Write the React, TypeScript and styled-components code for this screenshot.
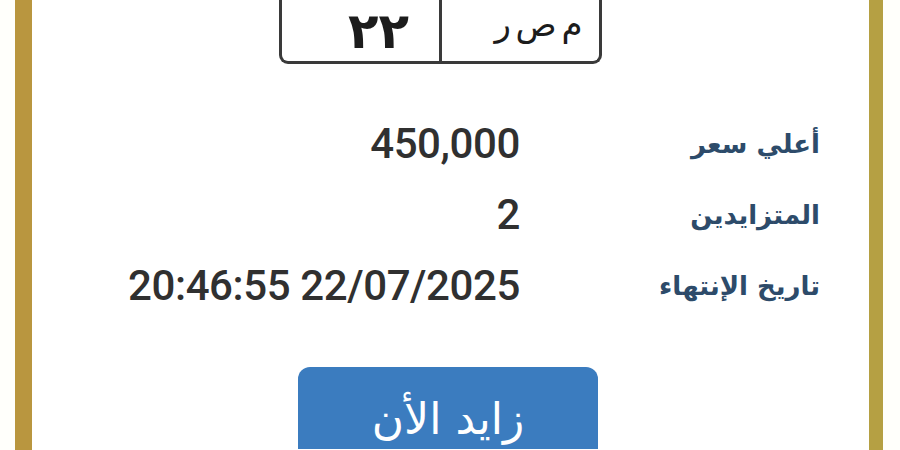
import React from 'react';
import styled, { createGlobalStyle } from 'styled-components';

const GlobalStyle = createGlobalStyle`
  html, body {
    margin: 0;
    padding: 0;
    background: #ffffff;
  }
  body {
    width: 900px;
    height: 450px;
    overflow: hidden;
    font-family: Roboto, "DejaVu Sans", sans-serif;
  }
`;

const Page = styled.div`
  height: 450px;
  padding: 0 17px 0 15px;
  box-sizing: border-box;
  background: #fffffb;
`;

const Card = styled.div`
  height: 100%;
  box-sizing: border-box;
  background: #ffffff;
  border-left: 17px solid #b9963f;
  border-right: 14px solid #b5a043;
  display: flex;
  flex-direction: column;
  align-items: stretch;
  overflow: hidden;
`;

const PlateWrap = styled.div`
  display: flex;
  justify-content: flex-start;
  padding-left: 247px;
`;

const Plate = styled.div`
  width: 323px;
  height: 64px;
  box-sizing: border-box;
  display: flex;
  border: 3px solid #3a3a3a;
  border-top: none;
  border-radius: 0 0 9px 9px;
`;

const PlateCell = styled.div<{ $divider?: boolean; $shift: number; $lift: number }>`
  flex: 1;
  display: flex;
  align-items: center;
  justify-content: center;
  padding-bottom: ${(p) => p.$lift}px;
  padding-left: ${(p) => p.$shift}px;
  border-right: ${(p) => (p.$divider ? '3px solid #3a3a3a' : 'none')};
  color: #1c1c1c;
`;

const PlateDigits = styled.span`
  font-family: "DejaVu Sans", sans-serif;
  font-weight: bold;
  font-size: 50px;
  line-height: 1.2;
  letter-spacing: 1px;
`;

const PlateLetters = styled.span`
  font-family: "DejaVu Sans", sans-serif;
  font-size: 34px;
  line-height: 1;
  word-spacing: -6px;
`;

const InfoGrid = styled.div`
  margin-top: 56px;
  display: grid;
  grid-template-columns: 1fr 300px;
  row-gap: 23px;
  padding-right: 49px;
`;

const Value = styled.div`
  text-align: right;
  font-family: Roboto, sans-serif;
  font-weight: 500;
  font-size: 42px;
  line-height: 48px;
  color: #303030;
  letter-spacing: -0.4px;
`;

const Label = styled.div`
  text-align: right;
  direction: rtl;
  font-family: "DejaVu Sans", sans-serif;
  font-weight: bold;
  font-size: 26px;
  line-height: 48px;
  color: #2d4b6a;
`;

const ButtonRow = styled.div`
  display: flex;
  padding-left: 266px;
  margin-top: 57px;
`;

const BidButton = styled.button`
  width: 300px;
  height: 82px;
  border: none;
  border-radius: 12px 12px 0 0;
  background: #3b7cbf;
  color: #ffffff;
  font-family: "DejaVu Sans", sans-serif;
  font-size: 44px;
  display: flex;
  justify-content: center;
  align-items: flex-start;
  padding-top: 28px;
  box-sizing: border-box;
  line-height: 1.1;
`;

const rows = [
  { label: 'أعلي سعر', value: '450,000' },
  { label: 'المتزايدين', value: '2' },
  { label: 'تاريخ الإنتهاء', value: '20:46:55 22/07/2025' },
];

export default function App() {
  return (
    <>
      <GlobalStyle />
      <Page>
        <Card>
          <PlateWrap>
            <Plate>
              <PlateCell $divider $shift={36} $lift={0}>
                <PlateDigits>٢٢</PlateDigits>
              </PlateCell>
              <PlateCell $shift={36} $lift={14}>
                <PlateLetters dir="rtl">م ص ر</PlateLetters>
              </PlateCell>
            </Plate>
          </PlateWrap>
          <InfoGrid>
            {rows.map((r) => (
              <React.Fragment key={r.label}>
                <Value>{r.value}</Value>
                <Label>{r.label}</Label>
              </React.Fragment>
            ))}
          </InfoGrid>
          <ButtonRow>
            <BidButton dir="rtl">زايد الأن</BidButton>
          </ButtonRow>
        </Card>
      </Page>
    </>
  );
}
